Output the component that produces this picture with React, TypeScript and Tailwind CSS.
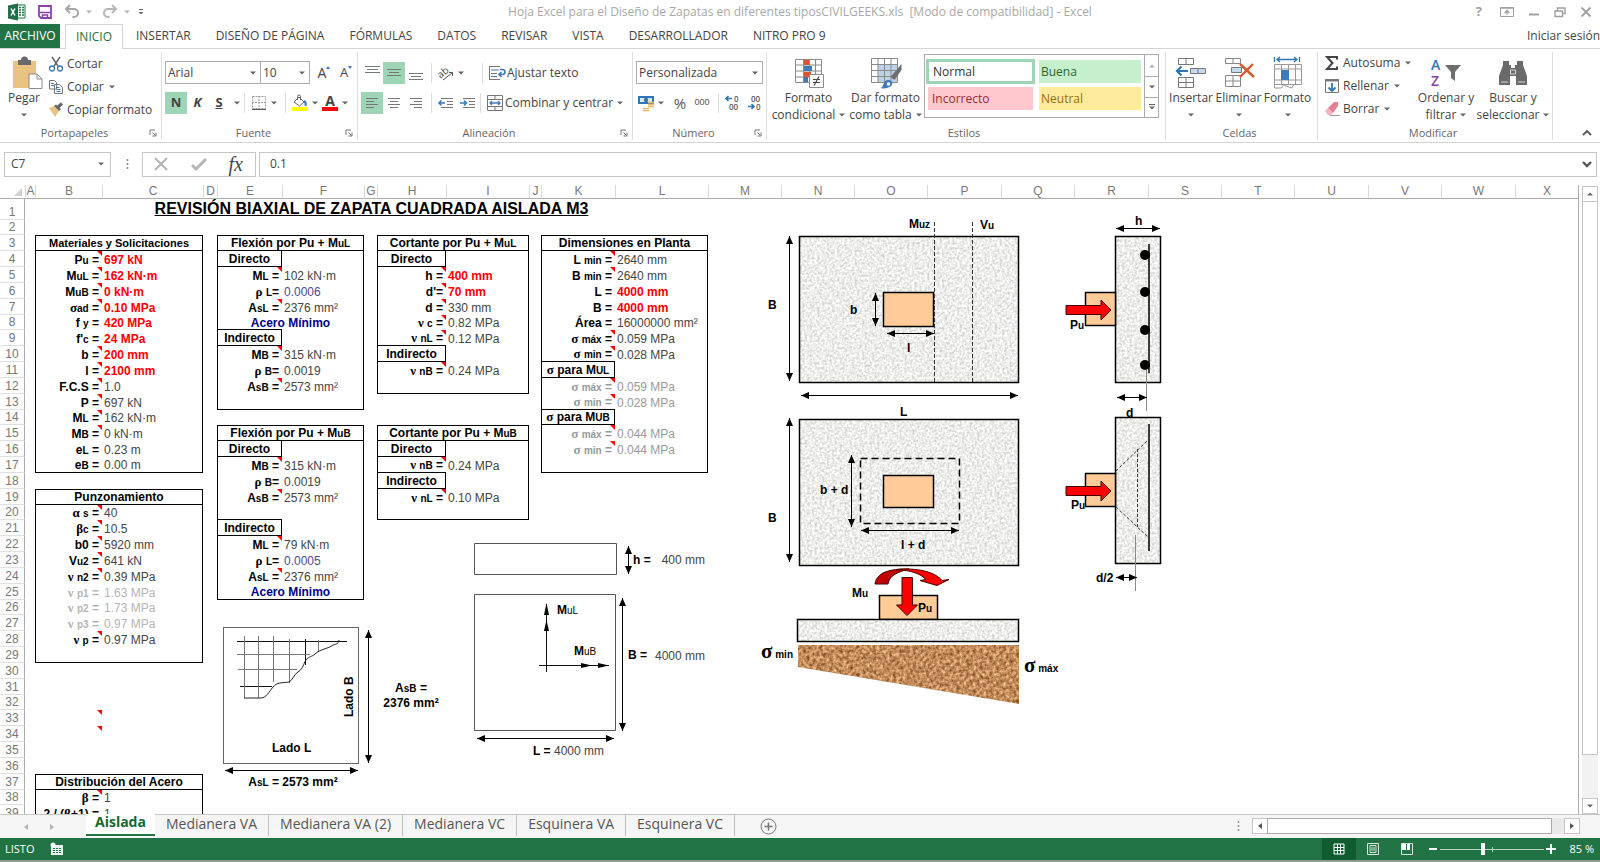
import { useState } from "react";
import type { ReactNode } from "react";
import clsx from "clsx";

/* ---------- small shared pieces ---------- */

function Caret({ className }: { className?: string }) {
    return (
        <svg viewBox="0 0 6 4" className={clsx("h-1 w-1.5 shrink-0 fill-[#666]", className)} aria-hidden="true">
            <path d="M0 0.5h6L3 3.5z" />
        </svg>
    );
}

function Divider() {
    return <span className="h-5 w-px shrink-0 bg-[#dcdcdc]" />;
}

function Icon({ size = 16, className, children }: { size?: number; className?: string; children: ReactNode }) {
    return (
        <svg
            viewBox={`0 0 ${size} ${size}`}
            width={size}
            height={size}
            fill="none"
            className={clsx("shrink-0 overflow-visible", className)}
            aria-hidden="true"
        >
            {children}
        </svg>
    );
}

function IconButton({ label, active, className, children }: {
    label: string;
    active?: boolean;
    className?: string;
    children: ReactNode;
}) {
    return (
        <button
            type="button"
            aria-label={label}
            className={clsx("flex h-[22px] shrink-0 items-center justify-center", active && "bg-[#9fd5b7]", className)}
        >
            {children}
        </button>
    );
}

function Group({ label, launcher, className, children }: {
    label: string;
    launcher?: boolean;
    className: string;
    children: ReactNode;
}) {
    return (
        <section className={clsx("flex h-[88px] shrink-0 flex-col border-r border-[#dedede]", className)}>
            <div className="flex min-h-0 flex-1">{children}</div>
            <div className="flex h-3.5 items-center pr-1 text-[11px] leading-3.5 text-[#666]">
                <span className="flex-1 text-center">{label}</span>
                {launcher && (
                    <button type="button" aria-label={`Opciones de ${label}`}>
                        <Icon size={8}>
                            <path d="M1 6V1h5M3.5 3.5l3 3M7 3.5V7H3.5" stroke="#777" />
                        </Icon>
                    </button>
                )}
            </div>
        </section>
    );
}

function SmallButton({ label, caret, gap = "gap-1", children }: {
    label: string;
    caret?: boolean;
    gap?: string;
    children: ReactNode;
}) {
    return (
        <button type="button" className={clsx("flex h-[22px] items-center text-[12px] text-[#444]", gap)}>
            {children}
            <span>{label}</span>
            {caret && <Caret className="ml-0.5" />}
        </button>
    );
}

function BigButton({ lines, className, children }: { lines: string[]; className: string; children: ReactNode }) {
    return (
        <button
            type="button"
            className={clsx("flex shrink-0 flex-col items-center pt-1 text-[12px] leading-[17px] text-[#444]", className)}
        >
            <span className="flex h-[33px] items-center">{children}</span>
            <span>{lines[0]}</span>
            <span className="flex h-[17px] items-center gap-1 whitespace-nowrap">
                {lines[1]}
                <Caret />
            </span>
        </button>
    );
}

function Combo({ label, value, className }: { label: string; value: string; className: string }) {
    return (
        <div className={clsx("flex h-[23px] shrink-0 items-center border border-[#ababab] bg-white pr-1", className)}>
            <select
                aria-label={label}
                defaultValue={value}
                className="block h-4 min-w-0 flex-1 appearance-none bg-white pl-0.5 text-[12px] leading-4 text-[#444] outline-none"
            >
                <option>{value}</option>
            </select>
            <Caret className="pointer-events-none" />
        </div>
    );
}

/* ---------- title bar and ribbon tabs ---------- */

function TitleBar() {
    return (
        <header className="flex h-6 shrink-0 items-center">
            <div className="flex w-[160px] items-center pl-2">
                <Icon size={18}>
                    <path d="M9 2h8v13H9z" fill="#fff" stroke="#217346" />
                    <path d="M11 4.500h2M14 4.500h2M11 7h2M14 7h2M11 9.500h2M14 9.500h2M11 12h2M14 12h2" stroke="#217346" strokeWidth="1.500" />
                    <path d="M0 2.500 10 0.500v17L0 15.500z" fill="#1e7145" />
                    <path d="m3 5.500 4 7M7 5.500l-4 7" stroke="#fff" strokeWidth="1.500" />
                </Icon>
                <button type="button" aria-label="Guardar" className="ml-3">
                    <Icon size={14}>
                        <path d="M1 1h12v12H3l-2-2z" stroke="#8a3fae" strokeWidth="1.800" />
                        <path d="M2 7.500h10M4.500 13v-3h5v3" stroke="#8a3fae" strokeWidth="1.500" />
                    </Icon>
                </button>
                <button type="button" aria-label="Deshacer" className="ml-3 flex items-center gap-1.5">
                    <Icon>
                        <path d="M6 1 2 5l4 4M2.500 5H10a4 4 0 0 1 0 8H8.500" stroke="#a6a6a6" strokeWidth="2" />
                    </Icon>
                    <Caret className="opacity-50" />
                </button>
                <button type="button" aria-label="Rehacer" className="ml-2.5 flex items-center gap-1.5">
                    <Icon>
                        <path d="m10 1 4 4-4 4M13.500 5H6a4 4 0 0 0 0 8h1.500" stroke="#b5b5b5" strokeWidth="2" />
                    </Icon>
                    <Caret className="opacity-50" />
                </button>
                <button type="button" aria-label="Personalizar barra" className="ml-2">
                    <Icon size={6}>
                        <path d="M1 0.500h4" stroke="#666" />
                        <path d="M0.500 3h5L3 5.500z" fill="#666" />
                    </Icon>
                </button>
            </div>
            <h1 className="flex-1 text-center text-[12px] whitespace-pre text-[#a8a8a8]">
                {"Hoja Excel para el Diseño de Zapatas en diferentes tiposCIVILGEEKS.xls  [Modo de compatibilidad] - Excel"}
            </h1>
            <div className="flex w-[160px] items-center justify-end gap-3.5 pr-2">
                <button type="button" aria-label="Ayuda" className="pr-1 text-[13px] font-bold text-[#a0a0a0]">?</button>
                <button type="button" aria-label="Opciones de cinta">
                    <Icon size={14}>
                        <path d="M0.500 2.500h13v9H0.500z" stroke="#a0a0a0" />
                        <path d="M0.500 3h13M7 10V5.500M4.500 8 7 5.500 9.500 8" stroke="#a0a0a0" strokeWidth="1.300" />
                    </Icon>
                </button>
                <button type="button" aria-label="Minimizar">
                    <Icon size={12}><path d="M1 8.500h10" stroke="#a0a0a0" strokeWidth="2" /></Icon>
                </button>
                <button type="button" aria-label="Restaurar">
                    <Icon size={12}>
                        <path d="M1 5h7.500v5.500H1zM3.500 4.500V2H11v5.500H9" stroke="#a0a0a0" strokeWidth="1.400" />
                    </Icon>
                </button>
                <button type="button" aria-label="Cerrar">
                    <Icon size={12}><path d="m1.500 1.500 9 9M10.500 1.500l-9 9" stroke="#a0a0a0" strokeWidth="1.800" /></Icon>
                </button>
            </div>
        </header>
    );
}

const RIBBON_TABS = [
    "INICIO",
    "INSERTAR",
    "DISEÑO DE PÁGINA",
    "FÓRMULAS",
    "DATOS",
    "REVISAR",
    "VISTA",
    "DESARROLLADOR",
    "NITRO PRO 9",
];

function RibbonTabs() {
    return (
        <nav className="flex h-[25px] shrink-0 border-b border-[#d4d4d4] text-[12px] text-[#444]">
            <button type="button" className="w-[60px] bg-[#217346] text-white">ARCHIVO</button>
            <div className="ml-[5px] flex flex-1 gap-px">
                {RIBBON_TABS.map((tab, i) => (
                    <button
                        key={tab}
                        type="button"
                        className={clsx(
                            i === 0
                                ? "-mb-px border border-b-0 border-[#d4d4d4] bg-white px-[10px] text-[#217346]"
                                : "px-3",
                        )}
                    >
                        {tab}
                    </button>
                ))}
            </div>
            <a href="#cuenta" className="leading-6 whitespace-nowrap">Iniciar sesión</a>
        </nav>
    );
}

/* ---------- ribbon groups ---------- */

function ClipboardGroup() {
    return (
        <Group label="Portapapeles" launcher className="w-[162px]">
            <BigButton lines={["Pegar", ""]} className="w-[48px]">
                <Icon size={32} className="ml-2">
                    <path d="M1 4h23v27H1z" fill="#eac282" />
                    <path d="M6 3h3a3.500 3.500 0 0 1 7 0h3v5H6z" fill="#6a6a6a" />
                    <path d="M17 17h8l5 5v9.500H17z" fill="#fff" stroke="#8a8a8a" />
                    <path d="M25 17v5h5" stroke="#8a8a8a" />
                </Icon>
            </BigButton>
            <div className="flex flex-col gap-px pt-px">
                <SmallButton label="Cortar" gap="gap-[3px]">
                    <Icon>
                        <path d="m4 1 6 9M12 1 6 10" stroke="#666" strokeWidth="1.500" />
                        <circle cx="4" cy="12.500" r="2.500" stroke="#3f79b7" strokeWidth="1.300" />
                        <circle cx="12" cy="12.500" r="2.500" stroke="#3f79b7" strokeWidth="1.300" />
                    </Icon>
                </SmallButton>
                <SmallButton label="Copiar" gap="gap-[3px]" caret>
                    <Icon>
                        <path d="M1.500 1.500h5l2 2V10h-7zM6.500 5.500h5l3 3v6h-8z" fill="#fff" stroke="#777" />
                        <path d="M3 4.500h3M3 6.500h3M8.500 8.500h3M8.500 10.500h4M8.500 12.500h4" stroke="#3f79b7" />
                    </Icon>
                </SmallButton>
                <SmallButton label="Copiar formato" gap="gap-[3px]">
                    <Icon>
                        <path d="m1 6 5-2 5 5-4 6z" fill="#eac282" />
                        <path d="m6 4 2-1.500L13 7l-2 2z" fill="#666" />
                        <path d="m10 5 4-3.500" stroke="#666" strokeWidth="3" />
                    </Icon>
                </SmallButton>
            </div>
        </Group>
    );
}

function FontGroup() {
    return (
        <Group label="Fuente" launcher className="w-[196px]">
            <div className="flex flex-1 flex-col pt-[9px] pl-[3px]">
                <div className="flex items-center">
                    <Combo label="Fuente" value="Arial" className="w-[96px]" />
                    <Combo label="Tamaño de fuente" value="10" className="-ml-px w-[50px]" />
                    <IconButton label="Aumentar tamaño" className="ml-1.5 w-4">
                        <span className="text-[14px] text-[#444]">A</span>
                        <Icon size={4} className="-mt-2.5"><path d="M0 3 2 0l2 3z" fill="#3f79b7" /></Icon>
                    </IconButton>
                    <IconButton label="Reducir tamaño" className="ml-1.5 w-4">
                        <span className="text-[13px] text-[#444]">A</span>
                        <Icon size={4} className="-mt-2.5"><path d="M0 0h4L2 3z" fill="#3f79b7" /></Icon>
                    </IconButton>
                </div>
                <div className="mt-2 flex items-center text-[13px] font-bold text-[#444]">
                    <IconButton label="Negrita" active className="w-[22px]">N</IconButton>
                    <IconButton label="Cursiva" className="w-[21px]"><i>K</i></IconButton>
                    <IconButton label="Subrayado" className="w-[22px]"><u>S</u></IconButton>
                    <Caret className="mx-1" />
                    <Divider />
                    <IconButton label="Bordes" className="ml-1.5 w-4">
                        <Icon size={14}>
                            <path d="M0.500 0.500h13v12H0.500zM7 0v13M0 6.500h14" stroke="#999" strokeDasharray="2 1" />
                            <path d="M0 13.500h14" stroke="#555" />
                        </Icon>
                    </IconButton>
                    <Caret className="mx-1" />
                    <span className="ml-1 flex"><Divider /></span>
                    <IconButton label="Color de relleno" className="ml-1.5 w-4">
                        <Icon>
                            <path d="m2 7 5-5 5 5-4.500 4z" fill="#fff" stroke="#666" />
                            <path d="M5.500 5V1.500a1.500 1.500 0 0 1 3 0V5" stroke="#666" />
                            <path d="M12 6c2 1 2 3 1.500 5" stroke="#3f79b7" strokeWidth="2" />
                            <path d="M0 12h16v4H0z" fill="#ff0" />
                        </Icon>
                    </IconButton>
                    <Caret className="mx-1" />
                    <IconButton label="Color de fuente" className="w-4 flex-col">
                        <span className="text-[14px] leading-3">A</span>
                        <span className="h-1 w-4 bg-[#f00]" />
                    </IconButton>
                    <Caret className="ml-1" />
                </div>
            </div>
        </Group>
    );
}

/* Three or four text lines of different lengths, as on the alignment buttons. */
function LinesIcon({ d }: { d: string }) {
    return <Icon><path d={d} stroke="#777" /></Icon>;
}

function AlignmentGroup() {
    return (
        <Group label="Alineación" launcher className="w-[275px]">
            <div className="flex flex-1 flex-col pt-[9px] pl-[3px]">
                <div className="flex h-[23px] items-center">
                    <IconButton label="Alinear arriba" className="w-[22px]"><LinesIcon d="M1 1.500h15M3 4.500h11M1 7.500h15" /></IconButton>
                    <IconButton label="Alinear en medio" active className="w-[22px]"><LinesIcon d="M1 4.500h14M3 7.500h10M1 10.500h14" /></IconButton>
                    <IconButton label="Alinear abajo" className="w-[22px]"><LinesIcon d="M1 8.500h14M3 11.500h10M1 14.500h14" /></IconButton>
                    <span className="ml-1 flex"><Divider /></span>
                    <IconButton label="Orientación" className="ml-1.5 w-4">
                        <Icon>
                            <text x="0" y="11" fontSize="10" fill="#444" transform="rotate(-38 5 9)">ab</text>
                            <path d="m5 15 9-7M11 7.500h3.500V11" stroke="#555" />
                        </Icon>
                    </IconButton>
                    <Caret className="mx-1" />
                    <span className="ml-3.5 flex"><Divider /></span>
                    <span className="ml-1.5">
                        <SmallButton label="Ajustar texto" gap="gap-0.5">
                            <Icon>
                                <path d="M0.500 1v14M0 1.500h11M2 8.500h6M0 14.500h11" stroke="#777" />
                                <path d="M2 5h8M2 11.500h6" stroke="#3f79b7" />
                                <path d="M11 4.500h2.500a1.500 1.500 0 0 1 0 5H10M12.500 7 10 9.500l2.500 2.500" stroke="#3f79b7" strokeWidth="1.600" />
                            </Icon>
                        </SmallButton>
                    </span>
                </div>
                <div className="mt-2 flex items-center">
                    <IconButton label="Alinear a la izquierda" active className="w-[22px]"><LinesIcon d="M2 3.500h12M2 6.500h8M2 9.500h12M2 12.500h8" /></IconButton>
                    <IconButton label="Centrar" className="w-[22px]"><LinesIcon d="M2 3.500h12M4 6.500h8M2 9.500h12M4 12.500h8" /></IconButton>
                    <IconButton label="Alinear a la derecha" className="w-[22px]"><LinesIcon d="M2 3.500h12M6 6.500h8M2 9.500h12M6 12.500h8" /></IconButton>
                    <span className="ml-1 flex"><Divider /></span>
                    <IconButton label="Disminuir sangría" className="ml-1.5 w-4">
                        <Icon>
                            <path d="M3 3.500h12M9 6.500h6M9 9.500h6M3 12.500h12" stroke="#777" />
                            <path d="M7 8H1M3.500 5.500 1 8l2.500 2.500" stroke="#3f79b7" strokeWidth="1.600" />
                        </Icon>
                    </IconButton>
                    <IconButton label="Aumentar sangría" className="ml-1.5 w-4">
                        <Icon>
                            <path d="M3 3.500h12M9 6.500h6M9 9.500h6M3 12.500h12" stroke="#777" />
                            <path d="M0 8h6M4 5.500 6.500 8 4 10.500" stroke="#3f79b7" strokeWidth="1.600" />
                        </Icon>
                    </IconButton>
                    <span className="ml-1 flex"><Divider /></span>
                    <span className="ml-1.5">
                        <SmallButton label="Combinar y centrar" gap="gap-0.5" caret>
                            <Icon>
                                <path d="M0.500 0.500h15v15H0.500zM0 4.500h16M0 11.500h16M8 0v4M8 12v4" stroke="#777" />
                                <path d="M3 8h10M5 6 3 8l2 2M11 6l2 2-2 2" stroke="#3f79b7" strokeWidth="1.300" />
                            </Icon>
                        </SmallButton>
                    </span>
                </div>
            </div>
        </Group>
    );
}

function NumberGroup() {
    return (
        <Group label="Número" launcher className="w-[134px]">
            <div className="flex flex-1 flex-col pt-[9px] pl-[3px]">
                <Combo label="Formato de número" value="Personalizada" className="w-[127px]" />
                <div className="mt-2 flex items-center text-[#555]">
                    <IconButton label="Formato de contabilidad" className="ml-0.5 w-4">
                        <Icon>
                            <path d="M0 1h16v8H0z" fill="#2f75b5" />
                            <path d="M2 3h12v4H2z" fill="#dbe8f4" />
                            <circle cx="8" cy="5" r="2.200" fill="#2f75b5" />
                            <path d="M10 7.500h6M10 9.500h6M10 11.500h6M5 13.500h6M5 15.500h6" stroke="#e6b86a" strokeWidth="1.400" />
                        </Icon>
                    </IconButton>
                    <Caret className="mx-1" />
                    <IconButton label="Estilo porcentual" className="ml-1 w-4 text-[15px]">%</IconButton>
                    <IconButton label="Estilo millares" className="ml-1 w-5 font-[Liberation_Sans] text-[9px]">000</IconButton>
                    <span className="ml-1.5 flex"><Divider /></span>
                    <IconButton label="Aumentar decimales" className="ml-1.5 w-4">
                        <Icon>
                            <path d="M7 3.500H1M3.500 1 1 3.500 3.500 6" stroke="#2f75b5" strokeWidth="1.700" />
                            <text x="9" y="7" fontSize="8" fontWeight="600" fill="#555">0</text>
                            <text x="4" y="15" fontSize="8" fontWeight="600" fill="#555">00</text>
                        </Icon>
                    </IconButton>
                    <IconButton label="Disminuir decimales" className="ml-1.5 w-4">
                        <Icon>
                            <text x="4" y="7" fontSize="8" fontWeight="600" fill="#555">00</text>
                            <path d="M1 11.500h6M4.500 9 7 11.500 4.500 14" stroke="#2f75b5" strokeWidth="1.700" />
                            <text x="9" y="15" fontSize="8" fontWeight="600" fill="#555">0</text>
                        </Icon>
                    </IconButton>
                </div>
            </div>
        </Group>
    );
}

function StylesGroup() {
    return (
        <Group label="Estilos" className="w-[399px]">
            <BigButton lines={["Formato", "condicional"]} className="ml-[3px] w-[77px]">
                <Icon size={32}>
                    <path d="M2.500 2.500h26v23h-26zM2 8h27M2 14h27M2 20h27M10.500 2v24M16.500 2v24M22.500 2v24" stroke="#8a8a8a" />
                    <path d="M11 3h5v5h-5zM11 15h7v5h-7z" fill="#d9572f" />
                    <path d="M11 9h8v5h-8zM11 20h4v5h-4z" fill="#3f79b7" />
                    <path d="M16.500 17.500h14v13h-14z" fill="#fff" stroke="#8a8a8a" />
                    <path d="M20 22.500h7M20 25.500h7M26 19.500l-5 9" stroke="#444" strokeWidth="1.200" />
                </Icon>
            </BigButton>
            <BigButton lines={["Dar formato", "como tabla"]} className="w-[77px]">
                <Icon size={32}>
                    <path d="M8 8h19v17H8z" fill="#bdd2ea" />
                    <path d="M1.500 1.500h26v24h-26zM1 7.500h27M1 13.500h27M1 19.500h27M8 1v25M14.500 1v25M21 1v25" stroke="#8a8a8a" />
                    <path d="M31.500 7v6l-7 10-4-3z" fill="#6e6e6e" />
                    <path d="M10 31c4 0 3-8 8-8 3 0 5 2 4 5-2 3-8 4-12 3z" fill="#3f79b7" />
                    <circle cx="18.500" cy="27" r="1.800" fill="#fff" />
                </Icon>
            </BigButton>
            <div className="mt-0.5 flex h-[64px] w-[235px] border border-[#ababab] text-[12px]">
                <div className="grid flex-1 grid-cols-[109px_1fr] grid-rows-2 gap-x-1 gap-y-0.5 pt-1 pr-[3px] pb-1.5 pl-px">
                    <button type="button" className="border-3 border-[#9fd5b7] bg-white pl-1 text-left text-[#333]">Normal</button>
                    <button type="button" className="my-px bg-[#c6efce] pl-0.5 text-left text-[#1e6b2a]">Buena</button>
                    <button type="button" className="mx-0.5 my-px bg-[#ffc7ce] pl-1 text-left text-[#9c2a33]">Incorrecto</button>
                    <button type="button" className="my-px bg-[#ffeb9c] pl-0.5 text-left text-[#9c6a10]">Neutral</button>
                </div>
                <div className="flex w-[14px] flex-col divide-y divide-[#ababab] border-l border-[#ababab]">
                    <IconButton label="Estilos anteriores" className="w-full"><Caret className="rotate-180 opacity-50" /></IconButton>
                    <button type="button" aria-label="Estilos siguientes" className="flex flex-1 items-center justify-center"><Caret /></button>
                    <button type="button" aria-label="Más estilos" className="flex flex-1 flex-col items-center justify-center gap-px">
                        <span className="h-px w-1.5 bg-[#666]" />
                        <Caret />
                    </button>
                </div>
            </div>
        </Group>
    );
}

function CellsGroup() {
    return (
        <Group label="Celdas" className="w-[152px]">
            <BigButton lines={["Insertar", ""]} className="ml-px w-[48px]">
                <Icon size={32}>
                    <path d="M3.500 1.500h15v6h-15zM11 1.500v6M3.500 20.500h15v10h-15zM3.500 25.500h15M11 20.500v10" stroke="#777" />
                    <path d="M15.500 11.500h15v5h-15z" fill="#c5d9ee" stroke="#777" />
                    <path d="M23 11.500v5" stroke="#777" />
                    <path d="M13 14H2M6.500 9.500 2 14l4.500 4.500" stroke="#2f75b5" strokeWidth="2.200" />
                </Icon>
            </BigButton>
            <BigButton lines={["Eliminar", ""]} className="w-[47px]">
                <Icon size={32}>
                    <path d="M2.500 1.500h15v5h-15zM10 1.500v5M2.500 18.500h15v11h-15zM2.500 24h15M10 18.500v11" stroke="#888" />
                    <path d="M8.500 10.500h10v5h-10z" fill="#c5d9ee" stroke="#777" />
                    <path d="m17 7 14 13M30 7 17 20" stroke="#d9572f" strokeWidth="2.400" />
                </Icon>
            </BigButton>
            <BigButton lines={["Formato", ""]} className="w-[51px]">
                <Icon size={32}>
                    <path d="M2.500 0v5M27.500 0v5M5 2.500h20M8 0 5 2.500 8 5M22 0l3 2.500L22 5" stroke="#2f75b5" strokeWidth="1.300" />
                    <path d="M2.500 7.500h27v20h-27zM2 12h28M2 23h28M9.500 7v21M16.500 7v21M23.500 7v21M2.500 28v3h7l2-3 8 3 2-3" stroke="#999" />
                    <path d="M9 13h8v10H9z" fill="#3f79b7" />
                </Icon>
            </BigButton>
        </Group>
    );
}

function EditingGroup() {
    return (
        <Group label="Modificar" className="w-[235px]">
            <div className="flex w-[95px] shrink-0 flex-col gap-px pl-1.5">
                <SmallButton label="Autosuma" gap="gap-[3px]" caret>
                    <Icon>
                        <path d="M13 4.500V2H3l5.500 6L3 14h10v-2.500" stroke="#444" strokeWidth="2" />
                    </Icon>
                </SmallButton>
                <SmallButton label="Rellenar" gap="gap-[3px]" caret>
                    <Icon>
                        <path d="M1.500 1.500h13v13h-13z" stroke="#777" />
                        <path d="M1 2.500h14" stroke="#777" strokeWidth="2" />
                        <path d="M8 5v8M4.500 9.500 8 13l3.500-3.500" stroke="#2f75b5" strokeWidth="1.800" />
                    </Icon>
                </SmallButton>
                <SmallButton label="Borrar" gap="gap-[3px]" caret>
                    <Icon>
                        <path d="m1 10 3-3 5 5-2 2H4z" fill="#f3b3be" />
                        <path d="m4 7 6-6h4v4l-5 7z" fill="#e4808f" />
                        <path d="M6 14.500h10" stroke="#999" />
                    </Icon>
                </SmallButton>
            </div>
            <BigButton lines={["Ordenar y", "filtrar"]} className="w-[66px]">
                <Icon size={30}>
                    <text x="0" y="12" fontSize="14" fontWeight="600" fill="#2f75b5">A</text>
                    <text x="0" y="28" fontSize="14" fontWeight="600" fill="#8a3fae">Z</text>
                    <path d="M14 7h16l-6 7v9l-4-3v-6z" fill="#6e6e6e" />
                </Icon>
            </BigButton>
            <BigButton lines={["Buscar y", "seleccionar"]} className="w-[68px]">
                <Icon size={30}>
                    <path d="M5 3h6v4h2v3h4V7h2V3h6v4l4 11v9H18v-9h-6v9H1v-9L5 7z" fill="#6a6a6a" />
                    <path d="M12.500 12h5v4h-5zM3 24h7M20 24h7" stroke="#d8d8d8" />
                </Icon>
            </BigButton>
        </Group>
    );
}

function Ribbon() {
    return (
        <div className="flex h-[94px] shrink-0 border-b border-[#d4d4d4] pt-[3px]">
            <ClipboardGroup />
            <FontGroup />
            <AlignmentGroup />
            <NumberGroup />
            <StylesGroup />
            <CellsGroup />
            <EditingGroup />
            <button type="button" aria-label="Contraer la cinta" className="mr-2 mb-1 ml-auto self-end">
                <Icon size={10}><path d="m1 7 4-4 4 4" stroke="#555" strokeWidth="1.800" /></Icon>
            </button>
        </div>
    );
}

function FormulaBar() {
    return (
        <div className="flex h-[42px] shrink-0 items-center pr-[3px] pl-1 text-[12px] text-[#444]">
            <label className="flex h-[25px] w-[107px] items-center border border-[#c6c6c6] pr-1.5">
                <input aria-label="Cuadro de nombres" defaultValue="C7" className="w-full min-w-0 pl-1.5 outline-none" />
                <Caret />
            </label>
            <span className="flex w-[31px] justify-center">
                <Icon size={10}><path d="M5.500 0v2M5.500 4v2M5.500 8v2" stroke="#888" strokeWidth="1.500" /></Icon>
            </span>
            <div className="flex h-[25px] w-[114px] items-center justify-between border border-[#c6c6c6] pr-3 pl-2.5">
                <button type="button" aria-label="Cancelar">
                    <Icon><path d="m2 2 12 12M14 2 2 14" stroke="#b5b5b5" strokeWidth="2" /></Icon>
                </button>
                <button type="button" aria-label="Introducir">
                    <Icon><path d="m1 9 4 4L15 3" stroke="#b5b5b5" strokeWidth="3" /></Icon>
                </button>
                <button type="button" className="font-[Liberation_Serif] text-[20px] leading-5 text-[#444] italic">fx</button>
            </div>
            <label className="ml-[3px] flex h-[25px] flex-1 items-center border border-[#c6c6c6] pr-1">
                <input aria-label="Barra de fórmulas" defaultValue="0.1" className="flex-1 pl-2.5 outline-none" />
                <Icon size={10}><path d="m1 3 4 4 4-4" stroke="#555" strokeWidth="2.400" /></Icon>
            </label>
        </div>
    );
}

/* ---------- worksheet ---------- */

const COLUMNS: [string, number][] = [
    ["A", 10], ["B", 67], ["C", 101], ["D", 14], ["E", 65], ["F", 82],
    ["G", 13], ["H", 69], ["I", 83], ["J", 12], ["K", 74], ["L", 93],
    ["M", 73], ["N", 73], ["O", 73], ["P", 74], ["Q", 73], ["R", 74],
    ["S", 73], ["T", 73], ["U", 74], ["V", 73], ["W", 74],
];

const LETTERS = [...COLUMNS.map(([letter]) => letter), "X"];

type Cell = {
    kind: "title" | "head" | "tag" | "label" | "value" | "remark";
    text: ReactNode;
    note?: boolean;
    tone?: string;
    span?: number;
};

const RED = "font-bold text-[#f00]";
const BLUE = "text-[#4a4a9a]";
const DIM = "text-[#999]";
const PALE = "text-[#b4b4b4]";

const head = (text: ReactNode): Cell => ({ kind: "head", text, span: 2 });
const tag = (text: ReactNode): Cell => ({ kind: "tag", text });
const G = ({ children }: { children: ReactNode }) => <span className="font-[Liberation_Serif] text-[13px] leading-0">{children}</span>;

const CELLS: Record<string, Cell> = {
    B1: { kind: "title", text: "REVISIÓN BIAXIAL DE ZAPATA CUADRADA AISLADA M3", span: 11 },
    B3: { kind: "head", text: <span className="text-[11px]">Materiales y Solicitaciones</span>, span: 2 },
    B19: head("Punzonamiento"),
    B37: head("Distribución del Acero"),
    B33: { kind: "label", text: "", note: true },
    B34: { kind: "label", text: "", note: true },
    E3: head(<>Flexión por Pu + M<sub>uL</sub></>),
    E4: tag("Directo"),
    E8: { kind: "remark", text: "Acero Mínimo", span: 2 },
    E9: tag("Indirecto"),
    E15: head(<>Flexión por Pu + M<sub>uB</sub></>),
    E16: tag("Directo"),
    E21: tag("Indirecto"),
    E25: { kind: "remark", text: "Acero Mínimo", span: 2 },
    H3: head(<>Cortante por Pu + M<sub>uL</sub></>),
    H4: tag("Directo"),
    H10: tag("Indirecto"),
    H15: head(<>Cortante por Pu + M<sub>uB</sub></>),
    H16: tag("Directo"),
    H18: tag("Indirecto"),
    K3: head("Dimensiones en Planta"),
    K11: tag(<><G>σ</G> para M<sub>UL</sub></>),
    K14: tag(<><G>σ</G> para M<sub>UB</sub></>),
};

/* label cell, label, value, value tone, and whether the label carries a comment mark */
const PAIRS: [string, ReactNode, string, string?, boolean?][] = [
    ["B4", <>P<sub>u</sub> =</>, "697 kN", RED, true],
    ["B5", <>M<sub>uL</sub> =</>, "162 kN·m", RED, true],
    ["B6", <>M<sub>uB</sub> =</>, "0 kN·m", RED, true],
    ["B7", <><G>σ</G><sub>ad</sub> =</>, "0.10 MPa", RED, true],
    ["B8", <>f <sub>y</sub> =</>, "420 MPa", RED],
    ["B9", <>f'<sub>c</sub> =</>, "24 MPa", RED],
    ["B10", "b =", "200 mm", RED, true],
    ["B11", "l =", "2100 mm", RED, true],
    ["B12", "F.C.S =", "1.0", "", true],
    ["B13", "P =", "697 kN", "", true],
    ["B14", <>M<sub>L</sub> =</>, "162 kN·m", "", true],
    ["B15", <>M<sub>B</sub> =</>, "0 kN·m", "", true],
    ["B16", <>e<sub>L</sub> =</>, "0.23 m"],
    ["B17", <>e<sub>B</sub> =</>, "0.00 m"],
    ["B20", <><G>α</G> <sub>s</sub> =</>, "40", "", true],
    ["B21", <><G>β</G><sub>c</sub> =</>, "10.5", "", true],
    ["B22", "b0 =", "5920 mm", "", true],
    ["B23", <>V<sub>u2</sub> =</>, "641 kN", "", true],
    ["B24", <><G>ν</G> <sub>n2</sub> =</>, "0.39 MPa", "", true],
    ["B25", <><G>ν</G> <sub>p1</sub> =</>, "1.63 MPa", PALE],
    ["B26", <><G>ν</G> <sub>p2</sub> =</>, "1.73 MPa", PALE],
    ["B27", <><G>ν</G> <sub>p3</sub> =</>, "0.97 MPa", PALE],
    ["B28", <><G>ν</G> <sub>p</sub> =</>, "0.97 MPa", "", true],
    ["B38", <><G>β</G> =</>, "1", "", true],
    ["B39", <>2 / (<G>β</G>+1) =</>, "1"],
    ["E5", <>M<sub>L</sub> =</>, "102 kN·m", "", true],
    ["E6", <><G>ρ</G> <sub>L</sub>=</>, "0.0006", BLUE],
    ["E7", <>A<sub>sL</sub> =</>, "2376 mm²", "", true],
    ["E10", <>M<sub>B</sub> =</>, "315 kN·m", "", true],
    ["E11", <><G>ρ</G> <sub>B</sub>=</>, "0.0019"],
    ["E12", <>A<sub>sB</sub> =</>, "2573 mm²", "", true],
    ["E17", <>M<sub>B</sub> =</>, "315 kN·m", "", true],
    ["E18", <><G>ρ</G> <sub>B</sub>=</>, "0.0019"],
    ["E19", <>A<sub>sB</sub> =</>, "2573 mm²", "", true],
    ["E22", <>M<sub>L</sub> =</>, "79 kN·m", "", true],
    ["E23", <><G>ρ</G> <sub>L</sub>=</>, "0.0005", BLUE],
    ["E24", <>A<sub>sL</sub> =</>, "2376 mm²", "", true],
    ["H5", "h =", "400 mm", RED, true],
    ["H6", "d'=", "70 mm", RED, true],
    ["H7", "d =", "330 mm", "", true],
    ["H8", <><G>ν</G> <sub>c</sub> =</>, "0.82 MPa", "", true],
    ["H9", <><G>ν</G> <sub>nL</sub> =</>, "0.12 MPa", "", true],
    ["H11", <><G>ν</G> <sub>nB</sub> =</>, "0.24 MPa", "", true],
    ["H17", <><G>ν</G> <sub>nB</sub> =</>, "0.24 MPa", "", true],
    ["H19", <><G>ν</G> <sub>nL</sub> =</>, "0.10 MPa", "", true],
    ["K4", <>L <sub>min</sub> =</>, "2640 mm", "", true],
    ["K5", <>B <sub>min</sub> =</>, "2640 mm", "", true],
    ["K6", "L =", "4000 mm", RED],
    ["K7", "B =", "4000 mm", RED],
    ["K8", "Área =", "16000000 mm²"],
    ["K9", <><G>σ</G> <sub>máx</sub> =</>, "0.059 MPa", "", true],
    ["K10", <><G>σ</G> <sub>min</sub> =</>, "0.028 MPa", "", true],
    ["K12", <><G>σ</G> <sub>máx</sub> =</>, "0.059 MPa", DIM, true],
    ["K13", <><G>σ</G> <sub>min</sub> =</>, "0.028 MPa", DIM, true],
    ["K15", <><G>σ</G> <sub>máx</sub> =</>, "0.044 MPa", DIM, true],
    ["K16", <><G>σ</G> <sub>min</sub> =</>, "0.044 MPa", DIM, true],
];

PAIRS.forEach(([ref, label, value, tone = "", note]) => {
    const next = LETTERS[LETTERS.indexOf(ref[0]) + 1] + ref.slice(1);
    CELLS[ref] = { kind: "label", text: label, note, tone: tone === DIM || tone === PALE ? tone : "text-black" };
    CELLS[next] = { kind: "value", text: value, tone: tone || "text-[#444]" };
});

/* framed blocks: first column, last column, first row, last row */
const FRAMES: [string, string, number, number][] = [
    ["B", "C", 3, 17], ["B", "C", 19, 29], ["B", "C", 37, 44],
    ["E", "F", 3, 13], ["E", "F", 15, 25],
    ["H", "I", 3, 12], ["H", "I", 15, 20],
    ["K", "L", 3, 17],
];

const KIND_CLASS: Record<Cell["kind"], string> = {
    title: "text-center align-top text-[16px] leading-5 font-bold underline",
    head: "border-b text-center align-bottom leading-[14px] font-bold",
    tag: "border-b border-r text-center align-bottom leading-[14px] font-bold",
    label: "pr-[3px] text-right align-bottom leading-[14px] font-bold",
    value: "pl-0.5 text-left align-bottom leading-[14px]",
    remark: "text-center align-bottom leading-[14px] font-bold text-[#00008b]",
};

function SheetCell({ letter, row }: { letter: string; row: number }) {
    const cell = CELLS[`${letter}${row}`];
    const frame = FRAMES.find(([l, r, t, b]) => letter >= l && letter <= r && row >= t && row <= b);
    const last = LETTERS[LETTERS.indexOf(letter) + (cell?.span ?? 1) - 1];
    // the row above is closed by a rule of its own under a heading
    const tagBelow = CELLS[`${letter}${row + 1}`]?.kind === "tag" && cell?.kind !== "head";
    return (
        <td
            colSpan={cell?.span}
            className={clsx(
                "relative overflow-hidden border-black p-0 whitespace-nowrap",
                cell && KIND_CLASS[cell.kind],
                cell?.tone,
                tagBelow && cell?.kind !== "remark" && "border-b",
                frame && letter === frame[0] && "border-l",
                frame && last === frame[1] && "border-r",
                frame && row === frame[2] && "border-t",
                frame && row === frame[3] && "border-b",
            )}
        >
            {cell?.text}
            {cell?.note && (
                <span className="absolute top-0 right-0 size-[5px] bg-[#f00] [clip-path:polygon(0_0,100%_0,100%_100%)]" />
            )}
            {tagBelow && cell?.kind === "remark" && (
                <span className="absolute bottom-0 left-0 h-px w-[64px] bg-black" />
            )}
        </td>
    );
}

function SheetRow({ row }: { row: number }) {
    const height = row === 1 ? "h-[21px]" : (row - 2) % 6 === 0 ? "h-[15px]" : "h-[16px]";
    const covered = new Set<string>();
    LETTERS.forEach((letter, i) => {
        const span = CELLS[`${letter}${row}`]?.span ?? 1;
        LETTERS.slice(i + 1, i + span).forEach((l) => covered.add(l));
    });
    return (
        <tr className={height}>
            <th scope="row" className="border-r border-b border-r-[#ababab] border-b-[#e0e0e0] p-0 align-bottom leading-[14px] font-normal text-[#777]">
                {row}
            </th>
            {LETTERS.filter((letter) => !covered.has(letter)).map((letter) => (
                <SheetCell key={letter} letter={letter} row={row} />
            ))}
        </tr>
    );
}

function SheetTable() {
    return (
        <table className="w-full table-fixed border-separate border-spacing-0 text-[12px] [&_sub]:static [&_sub]:text-[10px] [&_sub]:leading-0">
            <colgroup>
                <col className="w-[25px]" />
                {COLUMNS.map(([letter, width]) => (
                    <col key={letter} style={{ width }} />
                ))}
                <col />
            </colgroup>
            <thead>
                <tr className="h-[14px] text-[#777]">
                    <th className="border-b border-[#ababab] p-0 leading-[13px]">
                        <svg viewBox="0 0 8 8" className="ml-3.5 size-2 fill-[#d0d0d0]" aria-hidden="true"><path d="M8 0v8H0z" /></svg>
                    </th>
                    {LETTERS.map((letter) => (
                        <th key={letter} scope="col" className="border-b border-l border-b-[#ababab] border-l-[#d9d9d9] p-0 leading-[13px] font-normal">
                            {letter}
                        </th>
                    ))}
                </tr>
            </thead>
            <tbody>
                {Array.from({ length: 44 }, (_, i) => (
                    <SheetRow key={i} row={i + 1} />
                ))}
            </tbody>
        </table>
    );
}

/* ---------- drawings placed on the sheet ---------- */

function DrawingDefs() {
    return (
        <svg width="0" height="0" className="absolute" aria-hidden="true">
            <defs>
                <marker id="tip" viewBox="0 0 8 8" refX="8" refY="4" markerWidth="8" markerHeight="8" markerUnits="userSpaceOnUse" orient="auto-start-reverse">
                    <path d="M0 0.500 8 4 0 7.500z" fill="#000" />
                </marker>
                <filter id="concrete" x="0" y="0" width="1" height="1" colorInterpolationFilters="sRGB">
                    <feTurbulence type="fractalNoise" baseFrequency="0.4" numOctaves="2" seed="4" />
                    <feColorMatrix values="0.4 0 0 0 0.73  0.4 0 0 0 0.73  0.4 0 0 0 0.72  0 0 0 0 1" />
                    <feComposite in2="SourceGraphic" operator="in" />
                </filter>
                <filter id="soil" x="0" y="0" width="1" height="1" colorInterpolationFilters="sRGB">
                    <feTurbulence type="fractalNoise" baseFrequency="0.3" numOctaves="3" seed="9" />
                    <feColorMatrix values="0.75 0 0 0 0.38  0.75 0 0 0 0.17  0.65 0 0 0 0.03  0 0 0 0 1" />
                    <feComposite in2="SourceGraphic" operator="in" />
                </filter>
            </defs>
        </svg>
    );
}

/* Dimension line with an arrow head on each end. */
function Dim({ d }: { d: string }) {
    return <path d={d} stroke="#000" fill="none" markerStart="url(#tip)" markerEnd="url(#tip)" />;
}

function Concrete({ x, y, w, h }: { x: number; y: number; w: number; h: number }) {
    return (
        <>
            <rect x={x} y={y} width={w} height={h} fill="#fff" filter="url(#concrete)" />
            <rect x={x} y={y} width={w} height={h} fill="none" stroke="#000" strokeWidth="1.500" />
        </>
    );
}

function Column({ x, y, w, h }: { x: number; y: number; w: number; h: number }) {
    return <rect x={x} y={y} width={w} height={h} fill="#fc9" stroke="#000" strokeWidth="1.500" />;
}

function ReinforcementDrawing() {
    return (
        <svg viewBox="215 620 230 175" width="230" height="175" className="absolute top-[435px] left-[215px] text-[12px] font-bold">
            <rect x="223.500" y="627.500" width="135" height="136" fill="#fff" stroke="#666" />
            <path d="M237 641.500h110M240 686.500h32M305.500 639v26" stroke="#111" />
            <path d="M237 654.500h73M238 669.500h59M244.500 636v62M258.500 636v62M273.500 636v46M289.500 639v44M318.500 640v12" stroke="#777" />
            <path
                d="M244 698h17c5 0 8-6 12-11 4-5 9-4 16-5 4-2 5-8 9-10 6-4 5-8 8-12 3-4 6-3 9-6 5-5 13-5 18-9 4-1 6-2 6-5"
                fill="none"
                stroke="#222"
            />
            <Dim d="M368.500 630v133" />
            <Dim d="M225 770.500h133" />
            <text x="272" y="752">Lado L</text>
            <text transform="translate(353 717) rotate(-90)">Lado B</text>
            <text x="293" y="786" textAnchor="middle">A<tspan fontSize="10">sL</tspan> = 2573 mm²</text>
            <text x="411" y="692" textAnchor="middle">A<tspan fontSize="10">sB</tspan> =</text>
            <text x="411" y="707" textAnchor="middle">2376 mm²</text>
        </svg>
    );
}

function FootingDrawing() {
    return (
        <svg viewBox="465 535 250 230" width="250" height="230" className="absolute top-[350px] left-[465px] text-[12px]">
            <path d="M474.500 543.500h142v31h-142zM474.500 594.500h141v136h-141z" fill="#fff" stroke="#555" />
            <Dim d="M628.500 546v28" />
            <Dim d="M622.500 598v133" />
            <Dim d="M477 738.500h137" />
            <path d="M546.500 672v-68M539 665.500h70" stroke="#111" fill="none" />
            <path d="m546.500 603-2.500 12h5zM546.500 620l-2.500 11h5zM592 665.500l-11-2.500v5zM609 665.500l-11-2.500v5z" />
            <g fontWeight="bold">
                <text x="557" y="614">M<tspan fontSize="10" fontWeight="normal">uL</tspan></text>
                <text x="574" y="655">M<tspan fontSize="10" fontWeight="normal">uB</tspan></text>
                <text x="633" y="564">h =</text>
                <text x="628" y="659">B =</text>
                <text x="533" y="755">L =</text>
            </g>
            <g fill="#444">
                <text x="705" y="564" textAnchor="end">400 mm</text>
                <text x="705" y="660" textAnchor="end">4000 mm</text>
                <text x="554" y="755">4000 mm</text>
            </g>
        </svg>
    );
}

function PlanDrawing() {
    return (
        <svg viewBox="755 205 310 510" width="310" height="510" className="absolute top-[20px] left-[755px] text-[12px] font-bold">
            <Concrete x={799.5} y={236.5} w={219} h={146} />
            <Column x={883.5} y={292.5} w={50} h={34} />
            <path d="M934.500 222v160M972.500 222v160" stroke="#333" strokeDasharray="4 2" />
            <Dim d="M789.500 236v145" />
            <Dim d="M875.500 293v33" />
            <Dim d="M887 333.500h47" />
            <Dim d="M801 395.500h217" />
            <text x="909" y="228">M<tspan fontSize="10">uz</tspan></text>
            <text x="980" y="229">V<tspan fontSize="10">u</tspan></text>
            <text x="768" y="309">B</text>
            <text x="850" y="314">b</text>
            <text x="907" y="352">l</text>
            <text x="900" y="416">L</text>

            <Concrete x={799.5} y={419.5} w={219} h={146} />
            <rect x="860.500" y="458.500" width="99" height="65" fill="none" stroke="#000" strokeWidth="1.500" strokeDasharray="7 4" />
            <Column x={883.5} y={475.5} w={50} h={32} />
            <Dim d="M789.500 418v144" />
            <Dim d="M851.500 455v72" />
            <Dim d="M861 530.500h98" />
            <text x="768" y="522">B</text>
            <text x="820" y="494">b + d</text>
            <text x="901" y="549">l + d</text>

            <Column x={879.5} y={595.5} w={58} h={24} />
            <Concrete x={797.5} y={619.5} w={221} h={22} />
            <path d="M798 645h221v59L798 667z" fill="#fff" filter="url(#soil)" />
            <path d="M875 584c2-14 20-15 34-15-12 3-20 7-21 15z" fill="#c00000" stroke="#400" />
            <path d="M896 569.500c20-2 39 2 46 11l7-1-12 6-17-5 6-1c-6-6-14-9-30-10z" fill="#f00" stroke="#400" />
            <path d="M902 577.500h10.500V605h5L907 615.500 896.500 605h5.500z" fill="#f00" stroke="#400" />
            <text x="918" y="612">P<tspan fontSize="10">u</tspan></text>
            <text x="852" y="597">M<tspan fontSize="10">u</tspan></text>
            <text x="761" y="658"><tspan fontSize="21" fontFamily="Liberation Serif">σ</tspan><tspan fontSize="10"> min</tspan></text>
            <text x="1024" y="672"><tspan fontSize="21" fontFamily="Liberation Serif">σ</tspan><tspan fontSize="10"> máx</tspan></text>
        </svg>
    );
}

function SectionDrawing() {
    return (
        <svg viewBox="1060 205 110 395" width="110" height="395" className="absolute top-[20px] left-[1060px] text-[12px] font-bold">
            <Concrete x={1115.5} y={236.5} w={45} h={146} />
            <Column x={1085.5} y={292.5} w={30} h={33} />
            <path d="M1066 305.500h35v-5.500l10 10-10 10v-5.500h-35z" fill="#f00" stroke="#400" />
            <path d="M1149 244v129" stroke="#000" strokeWidth="1.500" />
            {[255, 292, 330, 365].map((y) => (
                <circle key={y} cx="1145" cy={y} r="5" />
            ))}
            <path d="M1146.500 370v41" stroke="#888" />
            <Dim d="M1116 228.500h44" />
            <Dim d="M1117 397.500h30" />
            <text x="1135" y="225">h</text>
            <text x="1126" y="417">d</text>
            <text x="1070" y="329">P<tspan fontSize="10">u</tspan></text>

            <Concrete x={1115.5} y={417.5} w={45} h={146} />
            <Column x={1085.5} y={473.5} w={30} h={33} />
            <path d="M1066 486.500h35v-5.500l10 10-10 10v-5.500h-35z" fill="#f00" stroke="#400" />
            <path d="M1149 424v127" stroke="#000" strokeWidth="1.500" />
            <path d="m1116 471 32-31M1116 507l33 31M1137.500 449v78" stroke="#333" strokeDasharray="3 2" />
            <path d="M1135.500 535v56" stroke="#888" />
            <Dim d="M1116 577.500h21" />
            <text x="1071" y="509">P<tspan fontSize="10">u</tspan></text>
            <text x="1096" y="582">d/2</text>
        </svg>
    );
}

function VerticalScroll() {
    return (
        <div className="mt-px mr-0.5 ml-[3px] flex w-4 shrink-0 flex-col bg-[#f2f2f2]">
            <button type="button" aria-label="Subir" className="flex h-4 shrink-0 items-center justify-center border border-[#c6c6c6] bg-white">
                <Caret className="rotate-180" />
            </button>
            <div className="h-[88%] border border-t-0 border-[#c6c6c6] bg-white" />
            <button type="button" aria-label="Bajar" className="mt-auto flex h-4 shrink-0 items-center justify-center border border-[#c6c6c6] bg-white">
                <Caret />
            </button>
        </div>
    );
}

function Sheet() {
    return (
        <main className="flex min-h-0 flex-1 overflow-hidden">
            <div className="relative min-w-0 flex-1 overflow-hidden border-r border-[#ababab] font-[Liberation_Sans,Arial,sans-serif]">
                <SheetTable />
                <DrawingDefs />
                <ReinforcementDrawing />
                <FootingDrawing />
                <PlanDrawing />
                <SectionDrawing />
            </div>
            <VerticalScroll />
        </main>
    );
}

/* ---------- bottom bars ---------- */

const SHEETS = ["Aislada", "Medianera VA", "Medianera VA (2)", "Medianera VC", "Esquinera VA", "Esquinera VC"];

function SheetTabs() {
    const [current, setCurrent] = useState("Aislada");
    return (
        <div className="flex h-6 shrink-0 items-start border-t border-[#c6c6c6] bg-[#f5f5f5]">
            <div className="flex h-full w-[86px] items-center gap-5 pl-[23px]">
                <button type="button" aria-label="Hoja anterior"><Icon size={6}><path d="M5 0v6L1 3z" fill="#b5b5b5" /></Icon></button>
                <button type="button" aria-label="Hoja siguiente"><Icon size={6}><path d="M1 0v6l4-3z" fill="#b5b5b5" /></Icon></button>
            </div>
            <div className="flex h-[21px] text-[14px] text-[#555]">
                {SHEETS.map((name) => (
                    <button
                        key={name}
                        type="button"
                        onClick={() => setCurrent(name)}
                        className={clsx(
                            "pb-1 leading-4",
                            name === current
                                ? "-mt-px border-b-2 border-[#217346] bg-white px-[9px] font-bold text-[#0e6a2e]"
                                : "border-r border-[#c0c0c0] px-[11px]",
                        )}
                    >
                        {name}
                    </button>
                ))}
            </div>
            <button type="button" aria-label="Hoja nueva" className="mt-[3px] ml-[25px]">
                <Icon size={17}>
                    <circle cx="8.500" cy="8.500" r="7.500" stroke="#777" />
                    <path d="M8.500 4.500v8M4.500 8.500h8" stroke="#777" strokeWidth="1.500" />
                </Icon>
            </button>
            <div className="ml-auto flex items-center pt-[3px] pr-5">
                <Icon size={10} className="mr-[9px]"><path d="M5.500 0v2M5.500 4v2M5.500 8v2" stroke="#999" strokeWidth="1.500" /></Icon>
                <div className="flex h-4 w-[328px] bg-[#e9e9e9]">
                    <button type="button" aria-label="Izquierda" className="flex w-4 items-center justify-center border border-[#c6c6c6] bg-white">
                        <Icon size={6}><path d="M5 0v6L1 3z" fill="#555" /></Icon>
                    </button>
                    <div className="-ml-px w-[285px] border border-[#ababab] bg-white" />
                    <button type="button" aria-label="Derecha" className="ml-auto flex w-4 items-center justify-center border border-[#c6c6c6] bg-white">
                        <Icon size={6}><path d="M1 0v6l4-3z" fill="#555" /></Icon>
                    </button>
                </div>
            </div>
        </div>
    );
}

function StatusBar() {
    return (
        <footer className="flex h-6 shrink-0 items-center border-b-2 border-[#8f9c94] bg-[#217346] pl-[5px] text-[11px] text-white">
            <span>LISTO</span>
            <Icon size={14} className="ml-4">
                <path d="M1 3h12v10H1z" fill="#e8f2ec" />
                <path d="M3 6.500h8M3 8.500h8M3 10.500h8" stroke="#217346" strokeDasharray="2 1" />
                <circle cx="3" cy="3" r="2.500" fill="#fff" />
            </Icon>
            <div className="ml-auto flex h-full items-center">
                <button type="button" aria-label="Normal" className="flex h-full w-[34px] items-center justify-center bg-[#0f5c30]">
                    <Icon size={12}><path d="M1 1h10v10H1zM1 4.500h10M1 7.500h10M4.500 1v10M7.500 1v10" stroke="#fff" /></Icon>
                </button>
                <button type="button" aria-label="Diseño de página" className="flex h-full w-[34px] items-center justify-center">
                    <Icon size={12}><path d="M0.500 0.500h11v11H0.500zM3 2.500h6v7H3zM4 5h4M4 7h4" stroke="#d8e8de" /></Icon>
                </button>
                <button type="button" aria-label="Vista previa de salto de página" className="flex h-full w-[34px] items-center justify-center">
                    <Icon size={12}>
                        <path d="M0.500 0.500h11v11H0.500z" stroke="#d8e8de" />
                        <path d="M1 1h4v6H1zM6 1h3v6H6z" fill="#fff" />
                    </Icon>
                </button>
                <button type="button" aria-label="Alejar" className="ml-1">
                    <Icon size={10}><path d="M1 5h8" stroke="#fff" strokeWidth="2" /></Icon>
                </button>
                <input
                    type="range"
                    aria-label="Zoom"
                    min="0"
                    max="100"
                    defaultValue="41"
                    className="mx-0.5 h-4 w-[104px] appearance-none bg-transparent bg-[linear-gradient(#b9d3c4,#b9d3c4)] bg-[length:1px_5px] bg-center bg-no-repeat [&::-webkit-slider-runnable-track]:h-px [&::-webkit-slider-runnable-track]:bg-[#b9d3c4] [&::-webkit-slider-thumb]:-mt-[6px] [&::-webkit-slider-thumb]:h-3 [&::-webkit-slider-thumb]:w-1 [&::-webkit-slider-thumb]:appearance-none [&::-webkit-slider-thumb]:bg-white"
                />
                <button type="button" aria-label="Acercar">
                    <Icon size={10}><path d="M0 5h10M5 0v10" stroke="#fff" strokeWidth="2" /></Icon>
                </button>
                <span className="w-[44px] pr-1.5 text-right">85 %</span>
            </div>
        </footer>
    );
}

export default function App() {
    return (
        <div className="flex h-screen flex-col overflow-hidden bg-white font-['Open_Sans','Noto_Sans',sans-serif]">
            <TitleBar />
            <RibbonTabs />
            <Ribbon />
            <FormulaBar />
            <Sheet />
            <SheetTabs />
            <StatusBar />
        </div>
    );
}
